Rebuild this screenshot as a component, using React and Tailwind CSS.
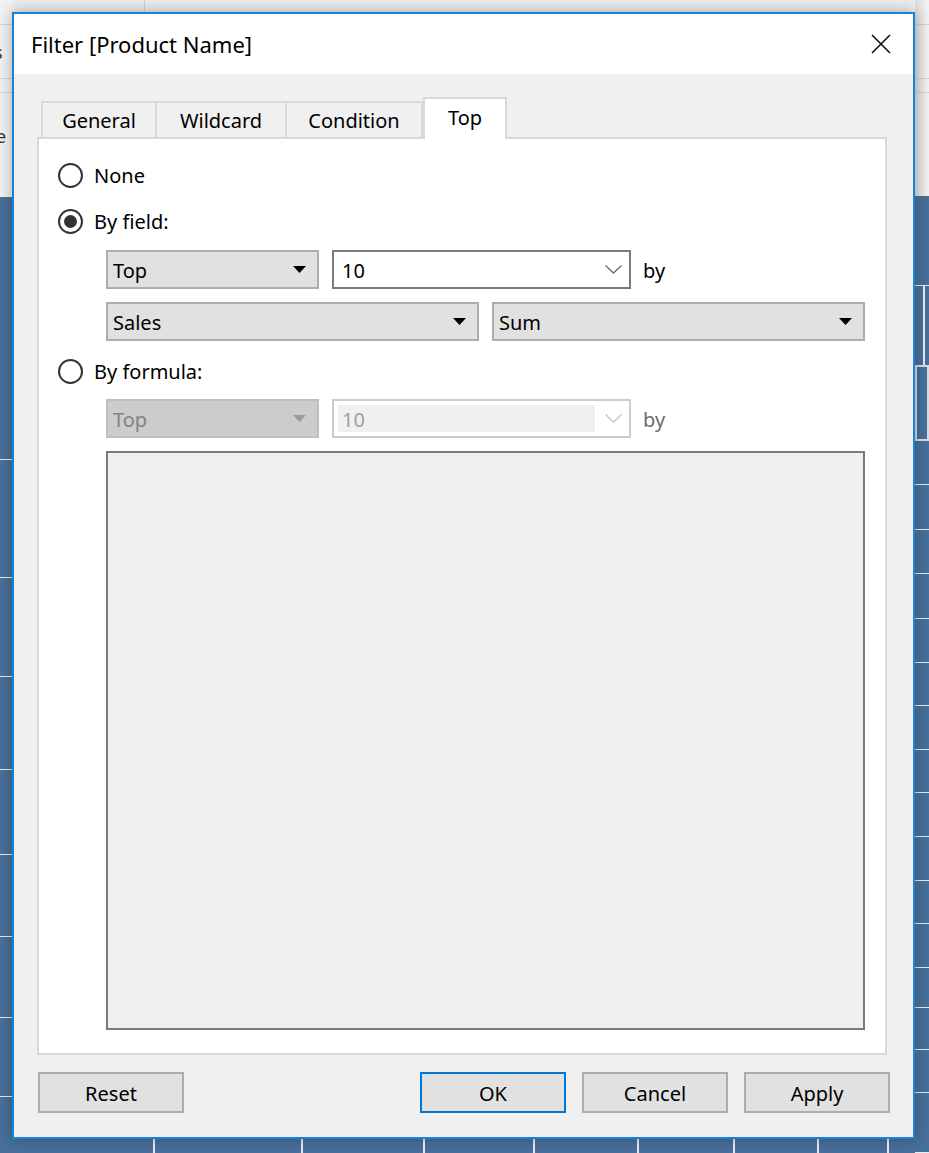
import React from "react";

const font = { fontFamily: '"Noto Sans", "Liberation Sans", sans-serif' };

const Caret = ({ disabled }) => (
  <svg width="13" height="7" viewBox="0 0 13 7" className="shrink-0">
    <polygon points="0,0 13,0 6.5,7" fill={disabled ? "#9c9c9c" : "#000"} />
  </svg>
);

const Chevron = ({ disabled }) => (
  <svg width="17" height="9" viewBox="0 0 17 9" className="shrink-0">
    <polyline
      points="0.5,0.5 8.5,8 16.5,0.5"
      fill="none"
      stroke={disabled ? "#c4c4c4" : "#6b6b6b"}
      strokeWidth="1.3"
    />
  </svg>
);

const Select = ({ label, width, disabled }) => (
  <div
    className={
      "h-[39px] flex items-center justify-between pl-[5px] pr-[11px] border-2 " +
      width +
      (disabled
        ? " bg-[#cccccc] border-[#bfbfbf] text-[#838383]"
        : " bg-[#e1e1e1] border-[#adadad] text-black")
    }
  >
    <span className="pt-[3px]">{label}</span>
    <Caret disabled={disabled} />
  </div>
);

const Combo = ({ value, disabled }) => (
  <div
    className={
      "w-[299px] h-[39px] flex items-center bg-white border-2 pl-[4px] pr-[7px] " +
      (disabled ? "border-[#cccccc]" : "border-[#7a7a7a]")
    }
  >
    <div
      className={
        "flex-1 h-[27px] flex items-center pl-[4px] pt-[3px] mr-[10px] " +
        (disabled ? "bg-[#f0f0f0] text-[#a0a0a0]" : "text-black")
      }
    >
      {value}
    </div>
    <Chevron disabled={disabled} />
  </div>
);

const Radio = ({ label, checked }) => (
  <div className="flex items-center gap-[11px] h-[25px]">
    <div className="w-[25px] h-[25px] rounded-full border-2 border-[#333] bg-white flex items-center justify-center">
      {checked && <div className="w-[13px] h-[13px] rounded-full bg-[#333]" />}
    </div>
    <span className="text-black pt-[1px]">{label}</span>
  </div>
);

const Button = ({ label, primary }) => (
  <button
    className={
      "w-[146px] h-[41px] bg-[#e1e1e1] text-black text-[20px] pt-[2px] border-2 " +
      (primary ? "border-[#0078d7]" : "border-[#adadad]")
    }
  >
    {label}
  </button>
);

// gaps between the white grid lines of the view behind the dialog
const leftLines = ["h-[263px]", "h-[118px]", "h-[99px]", "h-[93px]", "h-[85px]", "h-[82px]", "h-[81px]", "h-[79px]"];
const rightLines = [
  "h-[44px]", "h-[45px]", "h-[44px]", "h-[45px]", "h-[44px]", "h-[43px]", "h-[45px]",
  "h-[43px]", "h-[44px]", "h-[44px]", "h-[43px]", "h-[44px]", "h-[40px]", "h-[43px]", "h-[43px]", "h-[60px]",
];
const bottomCells = ["w-[143px]", "w-[148px]", "w-[122px]", "w-[110px]", "w-[104px]", "w-[96px]", "w-[84px]", "w-[70px]", "w-[26px]"];

export default function App() {
  return (
    <div className="relative w-[929px] h-[1153px] overflow-hidden bg-[#48709b]" style={font}>
      {/* app behind the dialog */}
      <div className="flex w-full h-full">
        <div className="w-[12px] flex flex-col">
          <div className="h-[197px] bg-[#f2f2f2] flex flex-col text-[18px] text-[#333] leading-none">
            <div className="h-[25px] border-b border-[#d6d6d6]" />
            <div className="h-[54px] border-b border-[#d6d6d6] flex items-center">
              <span className="-ml-[6px]">s</span>
            </div>
            <div className="h-[14px] border-b border-[#d6d6d6]" />
            <div className="flex-1 flex items-center">
              <span className="-ml-[4px] -mt-[18px]">e</span>
            </div>
          </div>
          {leftLines.map((h, i) => (
            <div key={i} className={h + " border-b border-[#e8edf3]"} />
          ))}
        </div>
        <div className="flex-1 flex flex-col">
          <div className="h-[12px] bg-[#ededed] flex">
            <div className="w-[133px] border-r border-[#cfcfcf]" />
          </div>
          <div className="flex-1 bg-[#f2f2f2] h-[185px]" />
          <div className="h-[956px] flex">
            {bottomCells.map((w, i) => (
              <div key={i} className={w + " border-r-2 border-[#e8edf3] last:border-r-0"} />
            ))}
          </div>
        </div>
        <div className="w-[14px] flex flex-col">
          <div className="h-[197px] bg-gradient-to-r from-[#dcdcdc] to-[#f3f3f3] flex flex-col">
            <div className="h-[25px] border-b border-[#d0d0d0]" />
            <div className="h-[54px] border-b border-[#d0d0d0]" />
            <div className="h-[14px] border-b border-[#d0d0d0]" />
          </div>
          <div className="h-[90px] border-b border-[#e8edf3]" />
          <div className="h-[79px] flex">
            <div className="w-[10px] border-r-2 border-[#e8edf3]" />
          </div>
          <div className="h-[77px] border-2 border-[#d8dee6]" />
          {rightLines.map((h, i) => (
            <div key={i} className={h + " border-b border-[#e8edf3]"} />
          ))}
        </div>
      </div>

      {/* dialog */}
      <div className="absolute left-[12px] top-[12px] w-[903px] h-[1127px] border-2 border-[#1883d7] flex flex-col shadow-[0_0_14px_rgba(0,0,0,0.3)] text-[20px]">
        <div className="h-[60px] bg-white flex items-center justify-between pl-[17px] pr-[22px]">
          <span className="text-[22px] text-black">Filter [Product Name]</span>
          <svg width="20" height="20" viewBox="0 0 20 20">
            <path d="M1 1 L19 19 M19 1 L1 19" stroke="#111" strokeWidth="1.6" fill="none" />
          </svg>
        </div>
        <div className="flex-1 bg-[#f0f0f0] flex flex-col pt-[23px] pl-[23px] pr-[26px] pb-[24px]">
          <div className="flex items-end ml-[4px] h-[42px] -mb-[2px] relative z-10">
            <div className="w-[116px] h-[38px] border-2 border-b-0 border-[#d9d9d9] flex items-center justify-center">
              General
            </div>
            <div className="w-[130px] h-[38px] border-2 border-l-0 border-b-0 border-[#d9d9d9] flex items-center justify-center">
              Wildcard
            </div>
            <div className="w-[136px] h-[38px] border-2 border-l-0 border-b-0 border-[#d9d9d9] flex items-center justify-center">
              Condition
            </div>
            <div className="w-[84px] h-[42px] border-2 border-b-0 border-[#d9d9d9] bg-white flex items-center justify-center pb-[2px]">
              Top
            </div>
          </div>
          <div className="h-[918px] border-2 border-[#d9d9d9] bg-white pt-[24px] pl-[19px] flex flex-col">
            <Radio label="None" />
            <div className="mt-[21px]">
              <Radio label="By field:" checked />
            </div>
            <div className="ml-[48px] mt-[16px] flex items-center gap-[13px]">
              <Select label="Top" width="w-[213px]" />
              <Combo value="10" />
              <span className="-ml-[1px] pt-[3px]">by</span>
            </div>
            <div className="ml-[48px] mt-[13px] flex items-center gap-[13px]">
              <Select label="Sales" width="w-[373px]" />
              <Select label="Sum" width="w-[373px]" />
            </div>
            <div className="mt-[18px]">
              <Radio label="By formula:" />
            </div>
            <div className="ml-[48px] mt-[15px] flex items-center gap-[13px]">
              <Select label="Top" width="w-[213px]" disabled />
              <Combo value="10" disabled />
              <span className="-ml-[1px] pt-[3px] text-[#6d6d6d]">by</span>
            </div>
            <div className="ml-[48px] mt-[13px] w-[759px] h-[579px] bg-[#f0f0f0] border-2 border-[#7a7a7a]" />
          </div>
          <div className="flex mt-[17px] ml-[1px] -mr-[3px]">
            <Button label="Reset" />
            <div className="ml-auto flex gap-[16px]">
              <Button label="OK" primary />
              <Button label="Cancel" />
              <Button label="Apply" />
            </div>
          </div>
        </div>
      </div>
    </div>
  );
}
